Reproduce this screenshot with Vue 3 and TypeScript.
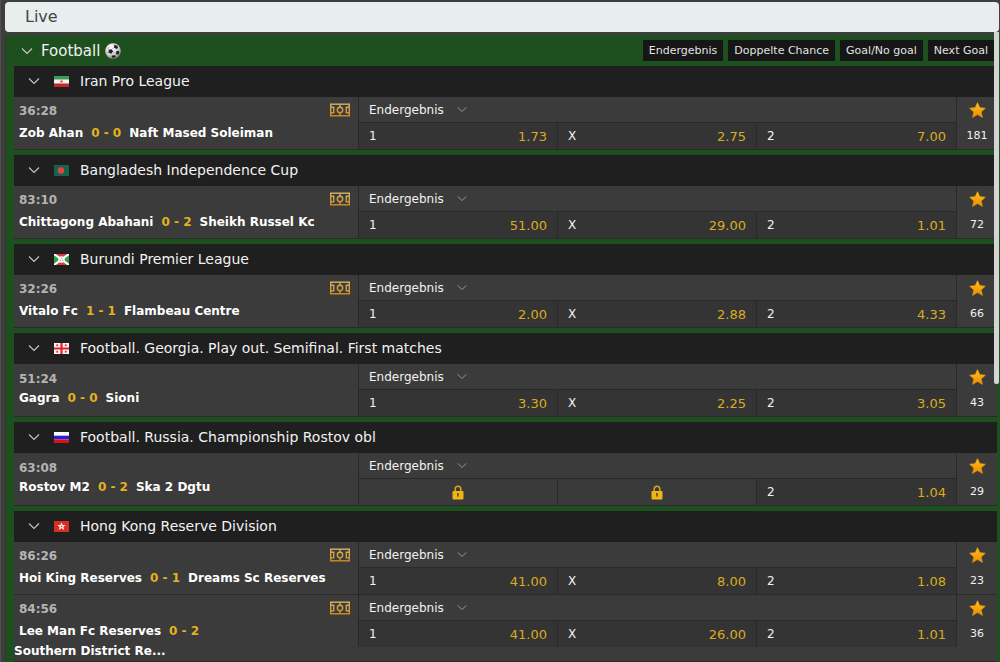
<script setup lang="ts">
interface Outcome {
  label: string
  odds: string | null
}
interface Match {
  time: string
  home: string
  score: string
  away: string
  pitch: boolean
  outcomes: Outcome[]
  markets: number
}
interface League {
  name: string
  flag: string
  matches: Match[]
}

const filters: string[] = ['Endergebnis', 'Doppelte Chance', 'Goal/No goal', 'Next Goal']

const outcomes = (one: string | null, draw: string | null, two: string | null): Outcome[] => [
  { label: '1', odds: one },
  { label: 'X', odds: draw },
  { label: '2', odds: two },
]

const leagues: League[] = [
  {
    name: 'Iran Pro League',
    flag: 'ir',
    matches: [
      { time: '36:28', home: 'Zob Ahan', score: '0 - 0', away: 'Naft Mased Soleiman', pitch: true, outcomes: outcomes('1.73', '2.75', '7.00'), markets: 181 },
    ],
  },
  {
    name: 'Bangladesh Independence Cup',
    flag: 'bd',
    matches: [
      { time: '83:10', home: 'Chittagong Abahani', score: '0 - 2', away: 'Sheikh Russel Kc', pitch: true, outcomes: outcomes('51.00', '29.00', '1.01'), markets: 72 },
    ],
  },
  {
    name: 'Burundi Premier League',
    flag: 'bi',
    matches: [
      { time: '32:26', home: 'Vitalo Fc', score: '1 - 1', away: 'Flambeau Centre', pitch: true, outcomes: outcomes('2.00', '2.88', '4.33'), markets: 66 },
    ],
  },
  {
    name: 'Football. Georgia. Play out. Semifinal. First matches',
    flag: 'ge',
    matches: [
      { time: '51:24', home: 'Gagra', score: '0 - 0', away: 'Sioni', pitch: false, outcomes: outcomes('3.30', '2.25', '3.05'), markets: 43 },
    ],
  },
  {
    name: 'Football. Russia. Championship Rostov obl',
    flag: 'ru',
    matches: [
      { time: '63:08', home: 'Rostov M2', score: '0 - 2', away: 'Ska 2 Dgtu', pitch: false, outcomes: outcomes(null, null, '1.04'), markets: 29 },
    ],
  },
  {
    name: 'Hong Kong Reserve Division',
    flag: 'hk',
    matches: [
      { time: '86:26', home: 'Hoi King Reserves', score: '0 - 1', away: 'Dreams Sc Reserves', pitch: true, outcomes: outcomes('41.00', '8.00', '1.08'), markets: 23 },
      { time: '84:56', home: 'Lee Man Fc Reserves', score: '0 - 2', away: 'Southern District Re...', pitch: true, outcomes: outcomes('41.00', '26.00', '1.01'), markets: 36 },
    ],
  },
]
</script>

<template>
  <main class="page">
    <svg class="defs" width="0" height="0" aria-hidden="true">
      <defs>
        <linearGradient id="star-fill" x1="0" y1="0" x2="0" y2="1">
          <stop offset="0" stop-color="#ffc21c" />
          <stop offset="1" stop-color="#f08a00" />
        </linearGradient>
        <linearGradient id="pitch-line" x1="0" y1="0" x2="0" y2="14" gradientUnits="userSpaceOnUse">
          <stop offset="0" stop-color="#d9b566" />
          <stop offset="1" stop-color="#c98a1e" />
        </linearGradient>
        <radialGradient id="ball-fill" cx="0.4" cy="0.3" r="0.75">
          <stop offset="0" stop-color="#ffffff" />
          <stop offset="0.6" stop-color="#cfcfcf" />
          <stop offset="1" stop-color="#777777" />
        </radialGradient>
      </defs>
    </svg>

    <h1 class="title">Live</h1>

    <section class="sport">
      <header class="sport-head">
        <button class="toggle sport-toggle" type="button">
          <svg class="chevron" viewBox="0 0 12 8" width="12" height="8"><path d="M1 1.5 6 6.5 11 1.5" /></svg>
          <span>Football</span>
          <svg class="ball" viewBox="0 0 16 16" width="16" height="16">
            <circle cx="8" cy="8" r="7.8" fill="url(#ball-fill)" />
            <path fill="#222" d="M9.3 1.8l3 1 .8 2.300-1.700.9-2.400-1.600zM3.800 6.800l3-.6 1.300 2.400-1.900 2.200-2.800-1.200zM11.300 8.200l2.500-.4.500 2.200-1.300 1.800-2-.9zM7 12.400l3-.1 1 1.400-2.500 1.200-1.900-.6z" />
            <path stroke="#999" stroke-width=".5" fill="none" d="M6.800 6.200 9 4.400M8.100 8.600l2.900 2.300M6.200 10.800l.8 1.600M3.400 9.600l-1.800.2M3.800 6.800 3.200 4" />
          </svg>
        </button>
        <nav class="filters">
          <button v-for="f in filters" :key="f" class="filter" type="button">{{ f }}</button>
        </nav>
      </header>

      <div class="leagues">
        <section v-for="league in leagues" :key="league.name" class="league">
          <button class="toggle league-head" type="button">
            <svg class="chevron" viewBox="0 0 12 8" width="12" height="8"><path d="M1 1.5 6 6.5 11 1.5" /></svg>
            <svg class="flag" viewBox="0 0 15 11" width="15" height="11">
              <template v-if="league.flag === 'ir'">
                <rect width="15" height="11" fill="#f3f3ee" />
                <rect width="15" height="3.5" fill="#3c9b5c" />
                <rect y="7.5" width="15" height="3.5" fill="#c9252c" />
                <circle cx="7.5" cy="5.5" r="1.3" fill="#e0605f" />
              </template>
              <template v-else-if="league.flag === 'bd'">
                <rect width="15" height="11" fill="#17624f" />
                <circle cx="7" cy="5.5" r="3.2" fill="#e2433f" />
              </template>
              <template v-else-if="league.flag === 'bi'">
                <rect width="15" height="11" fill="#35a04a" />
                <path d="M0 0h15L7.500 5.500zM0 11h15L7.500 5.500z" fill="#d53a45" />
                <path d="M0 0 15 11M15 0 0 11" stroke="#fff" stroke-width="2.2" />
                <circle cx="7.5" cy="5.5" r="3.2" fill="#fff" />
                <circle cx="7.5" cy="4.3" r=".7" fill="#d98a90" />
                <circle cx="6.3" cy="6.3" r=".7" fill="#d98a90" />
                <circle cx="8.7" cy="6.3" r=".7" fill="#d98a90" />
              </template>
              <template v-else-if="league.flag === 'ge'">
                <rect width="15" height="11" fill="#f8f2f2" />
                <path d="M6.400 0h2.200v11H6.400zM0 4.400h15v2.200H0z" fill="#e5202a" />
                <path d="M2.200 2.200h2M3.200 1.200v2M10.800 2.200h2M11.800 1.200v2M2.200 8.800h2M3.200 7.800v2M10.800 8.800h2M11.800 7.800v2" stroke="#e5202a" stroke-width="1.1" />
              </template>
              <template v-else-if="league.flag === 'ru'">
                <rect width="15" height="11" fill="#fafafa" />
                <rect y="3.7" width="15" height="3.7" fill="#2420d8" />
                <rect y="7.4" width="15" height="3.6" fill="#d8121c" />
              </template>
              <template v-else>
                <rect width="15" height="11" fill="#d92f22" />
                <path d="M7.500 1.300l1.200 2.600 2.900.2-2.200 1.900.8 2.900-2.700-1.600-2.700 1.600.8-2.900-2.200-1.900 2.900-.2z" fill="#fbe4df" />
                <circle cx="7.5" cy="5.5" r=".7" fill="#d92f22" />
              </template>
            </svg>
            <span class="league-name">{{ league.name }}</span>
          </button>

          <article v-for="m in league.matches" :key="m.home" class="match">
            <div class="info">
              <div class="info-top" :class="{ 'with-pitch': m.pitch }">
                <time class="clock">{{ m.time }}</time>
                <svg v-if="m.pitch" class="pitch" viewBox="0 0 20 14" width="20" height="14">
                  <g fill="none" stroke="url(#pitch-line)" stroke-width="1.4">
                    <rect x=".7" y="1.2" width="18.6" height="11.6" />
                    <path d="M.7 4.200h3v5.600h-3M19.300 4.200h-3v5.600h3M10 1.200v2.800M10 10v2.800" />
                    <circle cx="10" cy="7" r="2.7" />
                  </g>
                </svg>
              </div>
              <div class="teams">
                <span class="team home">{{ m.home }}</span>
                <span class="score">{{ m.score }}</span>
                <span class="team">{{ m.away }}</span>
              </div>
            </div>
            <div class="market">
              <button class="market-name" type="button">
                <span>Endergebnis</span>
                <svg class="chevron dim" viewBox="0 0 12 8" width="10" height="7"><path d="M1 1.5 6 6.5 11 1.5" /></svg>
              </button>
              <div class="outcomes">
                <button
                  v-for="o in m.outcomes"
                  :key="o.label"
                  class="outcome"
                  :class="{ locked: o.odds === null }"
                  :disabled="o.odds === null"
                  :aria-label="o.odds === null ? o.label : undefined"
                  type="button"
                >
                  <template v-if="o.odds !== null">
                    <span>{{ o.label }}</span>
                    <span class="odds">{{ o.odds }}</span>
                  </template>
                  <svg v-else viewBox="0 0 12 15" width="12" height="15">
                    <path d="M3.200 7V4.200a2.800 2.900 0 0 1 5.600 0V7" fill="none" stroke="#d8a51c" stroke-width="1.5" />
                    <rect x=".5" y="6" width="11" height="8.5" rx="1" fill="#f0b414" />
                    <path d="M5.200 9.200a.9.900 0 1 1 1.600 0l-.3 2.500h-1z" fill="#5a4208" />
                  </svg>
                </button>
              </div>
            </div>
            <div class="side">
              <button class="star" type="button" aria-label="Favorite">
                <svg viewBox="0 0 17 16" width="17" height="16">
                  <path d="M8.500.6l2.300 5 5.600.6-4.200 3.700 1.300 5.500-5-2.800-5 2.800 1.300-5.500L.6 6.200l5.600-.6z" fill="url(#star-fill)" stroke="#e89a10" stroke-width=".6" stroke-linejoin="round" />
                </svg>
              </button>
              <a class="count" href="#">{{ m.markets }}</a>
            </div>
          </article>
        </section>
      </div>
    </section>

    <div class="scroll-thumb"></div>
  </main>
</template>

<style>
body {
  margin: 0;
  background: #3e3e3e;
}
</style>

<style scoped>
.page {
  box-sizing: border-box;
  position: relative;
  height: 100vh;
  overflow: hidden;
  padding: 2px 0 0 4px;
  border-left: 1px solid #505050;
  background: #3e3e3e;
  color: #f2f2f2;
  font-family: Verdana, "DejaVu Sans", sans-serif;
  font-size: 12px;
}
button {
  margin: 0;
  padding: 0;
  border: 0;
  background: none;
  color: inherit;
  font: inherit;
  text-align: left;
  cursor: pointer;
}
svg {
  display: block;
  flex: none;
}
.defs {
  position: absolute;
}
.title {
  margin: 0 1px 3px 0;
  padding-left: 20px;
  border-radius: 4px;
  background: #e8eeee;
  color: #444;
  font-size: 16px;
  font-weight: 400;
  line-height: 30px;
}
.sport {
  padding: 0 3px 0 8px;
  border-left: 1px solid #2b3a2b;
  border-radius: 4px 0 0 0;
  background: #1e4f1e;
}
.sport-head {
  display: flex;
  align-items: center;
  justify-content: space-between;
  height: 31px;
}
.toggle {
  display: flex;
  align-items: center;
}
.chevron {
  fill: none;
  stroke: #c8c8c8;
  stroke-width: 1.1;
}
.dim {
  stroke: #a0a0a0;
}
.sport-toggle {
  gap: 8px;
  padding-left: 7px;
  font-size: 15px;
}
.ball {
  margin-left: -3px;
}
.filters {
  display: flex;
  gap: 5px;
  padding-right: 3px;
}
.filter {
  padding: 0 6px;
  background: #161616;
  color: #e2e2e2;
  font-size: 11px;
  line-height: 21px;
}
.leagues {
  display: flex;
  flex-direction: column;
  gap: 5px;
}
.league-head {
  box-sizing: border-box;
  width: 100%;
  height: 31px;
  padding: 0 0 2px 14px;
  background: #1f1f1f;
  font-size: 14px;
}
.flag {
  margin: 2px 11px 0 14px;
}
.match {
  display: grid;
  grid-template-columns: 344px 1fr 40px;
  align-items: start;
  min-height: 52px;
  border-bottom: 1px solid #2a2a2a;
  background: #3b3b3b;
}
.info-top {
  display: flex;
  justify-content: space-between;
  align-items: center;
  box-sizing: border-box;
  height: 24px;
  padding: 4px 8px 0 5px;
}
.with-pitch {
  height: 26px;
  padding: 0 8px 0 5px;
}
.clock {
  padding-top: 2px;
  color: #b4b4b4;
  font-weight: 700;
}
.teams {
  display: flex;
  flex-wrap: wrap;
  color: #fff;
  font-weight: 700;
  line-height: 20px;
}
.home {
  margin-left: 5px;
}
.score {
  margin: 0 8px;
  color: #e3b21e;
}
.market {
  border-left: 1px solid #292929;
  border-right: 1px solid #292929;
}
.market-name {
  display: flex;
  align-items: center;
  gap: 13px;
  box-sizing: border-box;
  width: 100%;
  height: 26px;
  padding-left: 10px;
  border-bottom: 1px solid #292929;
}
.outcomes {
  display: grid;
  grid-template-columns: repeat(3, 1fr);
  height: 26px;
}
.outcome {
  display: flex;
  align-items: center;
  justify-content: space-between;
  padding: 0 10px;
  border-right: 1px solid #292929;
  background: #343434;
}
.outcome:last-child {
  border-right: 0;
}
.locked {
  justify-content: center;
  background: #3a3a3a;
}
.odds {
  color: #d9ac20;
  font-size: 13px;
}
.side {
  display: flex;
  flex-direction: column;
  align-items: center;
}
.star {
  display: flex;
  align-items: center;
  height: 26px;
}
.count {
  color: #f2f2f2;
  font-size: 11px;
  line-height: 26px;
  text-decoration: none;
}
.scroll-thumb {
  position: absolute;
  top: 32px;
  right: 1px;
  width: 5px;
  height: 352px;
  border-radius: 0 0 2px 2px;
  background: #d4d4d4;
}
</style>
